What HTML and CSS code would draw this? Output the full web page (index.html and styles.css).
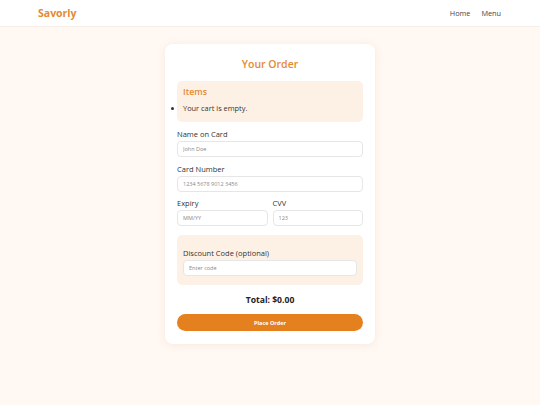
FILE: index.html
```html
<!DOCTYPE html>
<html lang="en">
<head>
<meta charset="utf-8">
<title>Savorly - Checkout</title>
<link rel="stylesheet" href="styles.css">
</head>
<body>
<header class="topbar">
  <div class="logo">Savorly</div>
  <nav class="nav">
    <a href="#">Home</a>
    <a href="#">Menu</a>
  </nav>
</header>
<main class="page">
  <section class="card">
    <h1 class="title">Your Order</h1>
    <div class="items">
      <h2 class="items-title">Items</h2>
      <ul class="item-list">
        <li>Your cart is empty.</li>
      </ul>
    </div>
    <div class="field">
      <label>Name on Card</label>
      <input type="text" placeholder="John Doe">
    </div>
    <div class="field">
      <label>Card Number</label>
      <input type="text" placeholder="1234 5678 9012 3456">
    </div>
    <div class="row">
      <div class="field">
        <label>Expiry</label>
        <input type="text" placeholder="MM/YY">
      </div>
      <div class="field">
        <label>CVV</label>
        <input type="text" placeholder="123">
      </div>
    </div>
    <div class="discount">
      <label>Discount Code (optional)</label>
      <input type="text" placeholder="Enter code">
    </div>
    <div class="total">Total: $0.00</div>
    <button class="order-btn">Place Order</button>
  </section>
</main>
</body>
</html>
```

FILE: styles.css
```css
* { box-sizing: border-box; }
html, body { margin: 0; padding: 0; }
body {
  font-family: "Open Sans", "Liberation Sans", sans-serif;
  background: #fff8f3;
  color: #333;
  height: 405px;
}
.topbar {
  height: 27px;
  background: #fff;
  display: flex;
  align-items: center;
  justify-content: space-between;
  padding: 0 38px;
  border-bottom: 1px solid #f6efe8;
}
.logo {
  font-size: 10.5px;
  font-weight: 700;
  color: #e48a35;
}
.nav { display: flex; gap: 11px; padding-right: 1px; }
.nav a {
  font-size: 7.3px;
  color: #444;
  text-decoration: none;
}
.page {
  display: flex;
  justify-content: center;
  padding-top: 17px;
}
.card {
  width: 210px;
  background: #fff;
  border-radius: 8px;
  box-shadow: 0 1px 8px rgba(200, 150, 110, 0.15);
  padding: 12px 12px 13px;
  display: flex;
  flex-direction: column;
}
.title {
  margin: 0;
  text-align: center;
  font-size: 10.5px;
  line-height: 16px;
  font-weight: 600;
  color: #e48a35;
}
.items {
  margin-top: 9px;
  background: #fdf1e6;
  border-radius: 5px;
  padding: 5px 6px 8px;
}
.items-title {
  margin: 0;
  font-size: 8.8px;
  line-height: 12px;
  font-weight: 600;
  color: #e48a35;
}
.item-list {
  margin: 4px 0 0;
  padding: 0;
  list-style-position: outside;
  font-size: 7.4px;
  line-height: 12px;
  color: #333;
}
.field {
  display: flex;
  flex-direction: column;
  gap: 2px;
  margin-top: 7px;
}
label {
  font-size: 7.5px;
  line-height: 10px;
  color: #333;
}
input {
  height: 16px;
  width: 100%;
  border: 1px solid #e6e6e6;
  border-radius: 4px;
  padding: 0 5px;
  font-family: inherit;
  font-size: 5.5px;
  background: #fff;
  outline: none;
}
input::placeholder { color: #888; }
.row {
  display: grid;
  grid-template-columns: 1fr 1fr;
  gap: 5px;
}
.row .field { margin-top: 6px; }
.discount {
  margin-top: 9px;
  background: #fdf1e6;
  border-radius: 5px;
  padding: 13px 6px 9px;
  display: flex;
  flex-direction: column;
  gap: 2px;
}
.total {
  margin-top: 8px;
  text-align: center;
  font-size: 8.6px;
  line-height: 14px;
  font-weight: 700;
  color: #222;
}
.order-btn {
  margin-top: 7px;
  height: 17px;
  border: none;
  border-radius: 9px;
  background: #e5801f;
  color: #fff;
  font-family: inherit;
  font-size: 5.5px;
  font-weight: 700;
  cursor: pointer;
}
```
